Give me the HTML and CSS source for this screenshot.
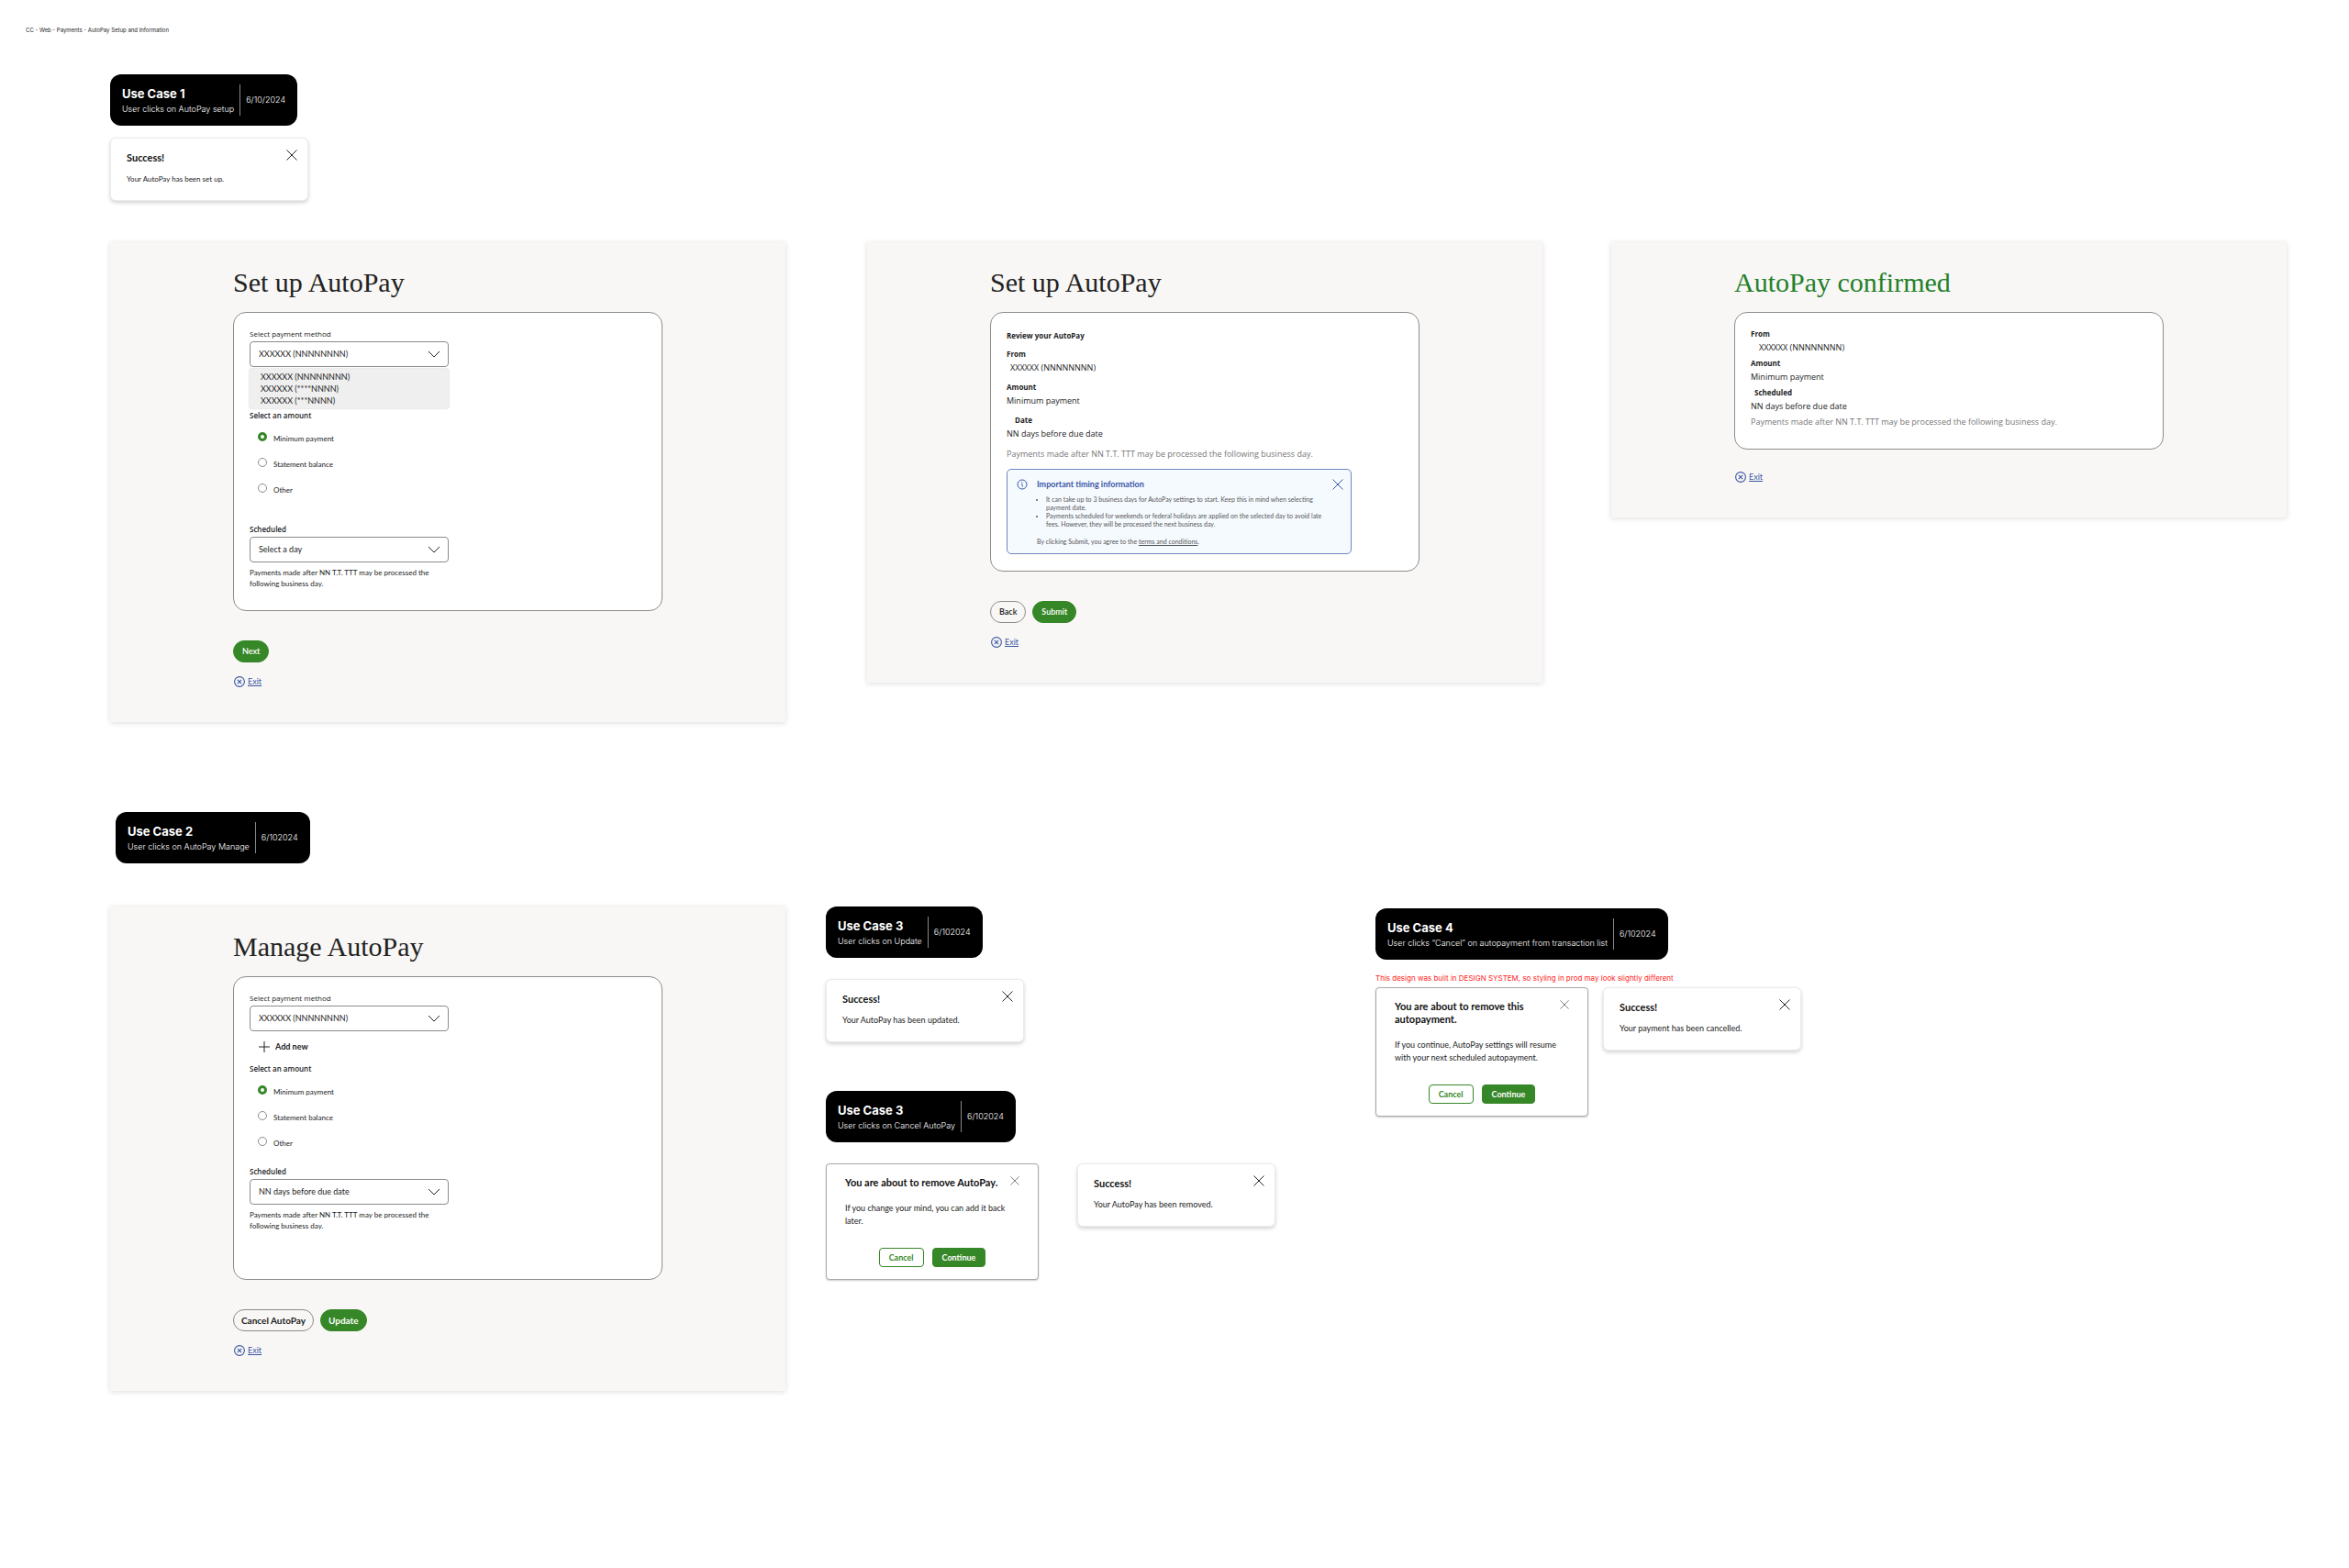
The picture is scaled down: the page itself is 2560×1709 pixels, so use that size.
FILE: index.html
```html
<!DOCTYPE html>
<html lang="en">
<head>
<meta charset="utf-8">
<title>CC - Web - Payments - AutoPay Setup and Information</title>
<link rel="stylesheet" href="styles.css">
</head>
<body>
<svg class="sprite" aria-hidden="true">
  <symbol id="icon-close" viewBox="0 0 12 12"><path d="M.5.5l11 11M11.5.5l-11 11" fill="none" stroke="currentColor"/></symbol>
  <symbol id="icon-chevron" viewBox="0 0 14 8"><path d="M1 1l6 6 6-6" fill="none" stroke="currentColor"/></symbol>
  <symbol id="icon-plus" viewBox="0 0 12 12"><path d="M6 0v12M0 6h12" fill="none" stroke="currentColor"/></symbol>
  <symbol id="icon-exit" viewBox="0 0 12 12"><circle cx="6" cy="6" r="5.4" fill="none" stroke="currentColor" stroke-width="1.1"/><path d="M3.8 3.8l4.4 4.4M8.2 3.8l-4.4 4.4" fill="none" stroke="currentColor" stroke-width="1.1"/></symbol>
  <symbol id="icon-info" viewBox="0 0 12 12"><circle cx="6" cy="6" r="5" fill="none" stroke="currentColor"/><path d="M5.2 5.2H6v2.6q0 .7.8.7" fill="none" stroke="currentColor" stroke-width=".9"/><circle cx="5.9" cy="3.5" r=".6" fill="currentColor"/></symbol>
</svg>

<header class="page-label">CC - Web - Payments - AutoPay Setup and Information</header>

<main>
  <section class="intro">
    <div class="badge">
      <div><h2 class="badge-title">Use Case 1</h2><p>User clicks on AutoPay setup</p></div>
      <time class="badge-date">6/10/2024</time>
    </div>
    <div class="toast toast-small">
      <div><h3>Success!</h3><p>Your AutoPay has been set up.</p></div>
      <button class="close" aria-label="Close"><svg><use href="#icon-close"/></svg></button>
    </div>
  </section>

  <section class="setup-flow">
    <article class="screen">
      <h1>Set up AutoPay</h1>
      <form class="card" id="setup-form">
        <label class="field-label" for="method-1">Select payment method</label>
        <div class="select">
          <select id="method-1"><option>XXXXXX (NNNNNNNN)</option></select>
          <svg><use href="#icon-chevron"/></svg>
        </div>
        <ul class="options" role="listbox" aria-label="Payment methods">
          <li role="option">XXXXXX (NNNNNNNN)</li>
          <li role="option">XXXXXX (****NNNN)</li>
          <li role="option">XXXXXX (***NNNN)</li>
        </ul>
        <fieldset class="amounts after-options">
          <legend>Select an amount</legend>
          <label><input type="radio" name="amount-1" checked><span>Minimum payment</span></label>
          <label><input type="radio" name="amount-1"><span>Statement balance</span></label>
          <label><input type="radio" name="amount-1"><span>Other</span></label>
        </fieldset>
        <label class="field-label strong roomy" for="day-1">Scheduled</label>
        <div class="select">
          <select id="day-1"><option>Select a day</option></select>
          <svg><use href="#icon-chevron"/></svg>
        </div>
        <p class="help">Payments made after NN T.T. TTT may be processed the following business day.</p>
      </form>
      <div class="actions"><button class="pill primary">Next</button></div>
      <a class="exit" href="#"><svg><use href="#icon-exit"/></svg><span>Exit</span></a>
    </article>

    <article class="screen">
      <h1>Set up AutoPay</h1>
      <div class="card review">
        <h2>Review your AutoPay</h2>
        <dl>
          <div><dt>From</dt><dd class="nudge-s">XXXXXX (NNNNNNNN)</dd></div>
          <div><dt>Amount</dt><dd>Minimum payment</dd></div>
          <div><dt class="nudge-m">Date</dt><dd>NN days before due date</dd></div>
        </dl>
        <p class="note">Payments made after NN T.T. TTT may be processed the following business day.</p>
        <aside class="alert">
          <svg class="alert-icon"><use href="#icon-info"/></svg>
          <div>
            <h3>Important timing information</h3>
            <ul>
              <li>It can take up to 3 business days for AutoPay settings to start. Keep this in mind when selecting payment date.</li>
              <li>Payments scheduled for weekends or federal holidays are applied on the selected day to avoid late fees. However, they will be processed the next business day.</li>
            </ul>
            <p>By clicking Submit, you agree to the <a href="#">terms and conditions</a>.</p>
          </div>
          <button class="close" aria-label="Close"><svg><use href="#icon-close"/></svg></button>
        </aside>
      </div>
      <div class="actions"><button class="pill">Back</button><button class="pill primary">Submit</button></div>
      <a class="exit" href="#"><svg><use href="#icon-exit"/></svg><span>Exit</span></a>
    </article>

    <article class="screen">
      <h1 class="confirmed">AutoPay confirmed</h1>
      <div class="card summary">
        <dl>
          <div><dt>From</dt><dd class="nudge-m">XXXXXX (NNNNNNNN)</dd></div>
          <div><dt>Amount</dt><dd>Minimum payment</dd></div>
          <div><dt class="nudge-s">Scheduled</dt><dd>NN days before due date</dd></div>
        </dl>
        <p class="note">Payments made after NN T.T. TTT may be processed the following business day.</p>
      </div>
      <a class="exit exit-far" href="#"><svg><use href="#icon-exit"/></svg><span>Exit</span></a>
    </article>
  </section>

  <section class="manage-intro">
    <div class="badge">
      <div><h2 class="badge-title">Use Case 2</h2><p>User clicks on AutoPay Manage</p></div>
      <time class="badge-date">6/102024</time>
    </div>
  </section>

  <section class="manage-flow">
    <article class="screen">
      <h1>Manage AutoPay</h1>
      <form class="card manage" id="manage-form">
        <label class="field-label" for="method-2">Select payment method</label>
        <div class="select">
          <select id="method-2"><option>XXXXXX (NNNNNNNN)</option></select>
          <svg><use href="#icon-chevron"/></svg>
        </div>
        <button type="button" class="add-new"><svg><use href="#icon-plus"/></svg>Add new</button>
        <fieldset class="amounts">
          <legend>Select an amount</legend>
          <label><input type="radio" name="amount-2" checked><span>Minimum payment</span></label>
          <label><input type="radio" name="amount-2"><span>Statement balance</span></label>
          <label><input type="radio" name="amount-2"><span>Other</span></label>
        </fieldset>
        <label class="field-label strong" for="day-2">Scheduled</label>
        <div class="select">
          <select id="day-2"><option>NN days before due date</option></select>
          <svg><use href="#icon-chevron"/></svg>
        </div>
        <p class="help">Payments made after NN T.T. TTT may be processed the following business day.</p>
      </form>
      <div class="actions actions-large"><button class="pill">Cancel AutoPay</button><button class="pill primary">Update</button></div>
      <a class="exit" href="#"><svg><use href="#icon-exit"/></svg><span>Exit</span></a>
    </article>

    <div class="case-column">
      <div class="badge">
        <div><h2 class="badge-title">Use Case 3</h2><p>User clicks on Update</p></div>
        <time class="badge-date">6/102024</time>
      </div>
      <div class="toast">
        <div><h3>Success!</h3><p>Your AutoPay has been updated.</p></div>
        <button class="close" aria-label="Close"><svg><use href="#icon-close"/></svg></button>
      </div>
      <div class="badge badge-next">
        <div><h2 class="badge-title">Use Case 3</h2><p>User clicks on Cancel AutoPay</p></div>
        <time class="badge-date">6/102024</time>
      </div>
      <div class="pair pair-wide">
        <div class="dialog" role="dialog" aria-labelledby="remove-title">
          <div class="dialog-head">
            <h3 id="remove-title">You are about to remove AutoPay.</h3>
            <button class="close" aria-label="Close"><svg><use href="#icon-close"/></svg></button>
          </div>
          <p>If you change your mind, you can add it back later.</p>
          <div class="dialog-actions"><button class="btn">Cancel</button><button class="btn primary">Continue</button></div>
        </div>
        <div class="toast">
          <div><h3>Success!</h3><p>Your AutoPay has been removed.</p></div>
          <button class="close" aria-label="Close"><svg><use href="#icon-close"/></svg></button>
        </div>
      </div>
    </div>

    <div class="case-column case-last">
      <div class="badge">
        <div><h2 class="badge-title">Use Case 4</h2><p>User clicks “Cancel” on autopayment from transaction list</p></div>
        <time class="badge-date">6/102024</time>
      </div>
      <p class="remark">This design was built in DESIGN SYSTEM, so styling in prod may look slightly different</p>
      <div class="pair">
        <div class="dialog" role="dialog" aria-labelledby="payment-title">
          <div class="dialog-head">
            <h3 id="payment-title">You are about to remove this autopayment.</h3>
            <button class="close" aria-label="Close"><svg><use href="#icon-close"/></svg></button>
          </div>
          <p>If you continue, AutoPay settings will resume with your next scheduled autopayment.</p>
          <div class="dialog-actions"><button class="btn">Cancel</button><button class="btn primary">Continue</button></div>
        </div>
        <div class="toast">
          <div><h3>Success!</h3><p>Your payment has been cancelled.</p></div>
          <button class="close" aria-label="Close"><svg><use href="#icon-close"/></svg></button>
        </div>
      </div>
    </div>
  </section>
</main>
</body>
</html>
```
FILE: styles.css
```css
:root {
  --green: #368727;
  --blue: #3a56a5;
  --ink: #222;
  --line: #8c8c8c;
  --wide: "Open Sans", "Noto Sans", sans-serif;
}

* { box-sizing: border-box; margin: 0; padding: 0; }

body {
  background: #fff;
  color: var(--ink);
  font: 400 9px/12px Lato, "Open Sans", sans-serif;
}

button, select, input { font: inherit; color: inherit; }
button { background: none; border: 0; white-space: nowrap; }
ul { list-style: none; }
fieldset { border: 0; min-width: 0; }
svg { display: block; }
.sprite { position: absolute; width: 0; height: 0; }

.page-label {
  padding: 28px 28px 43px;
  font: 400 6px/10px Inter, sans-serif;
}

main { padding: 0 68px 60px 120px; }

/* Black use-case badges */
.badge {
  display: flex;
  align-items: center;
  width: max-content;
  height: 56px;
  padding: 0 13px;
  border-radius: 12px;
  background: #000;
  color: #fff;
  font: 300 9px/14px Inter, sans-serif;
}
.badge-title { font-size: 13px; line-height: 20px; font-weight: 700; }
.badge-date {
  margin-left: 6px;
  padding-left: 6px;
  border-left: 1px solid #8a8a8a;
  line-height: 34px;
}

/* Success toasts */
.toast {
  display: flex;
  justify-content: space-between;
  align-items: flex-start;
  width: 216px;
  height: 69px;
  padding: 12px 11px 12px 17px;
  border: 1px solid #ebebeb;
  border-radius: 6px;
  background: #fff;
  box-shadow: 0 2px 4px rgba(0, 0, 0, .18);
}
.toast h3 { margin-top: 2px; color: #111; font-size: 11px; line-height: 14px; }
.toast p { margin-top: 9px; line-height: 14px; }
.toast-small { margin-top: 13px; }
.toast-small p { font-size: 8px; }

.close { flex: none; width: 12px; height: 12px; }
.close svg { width: 12px; height: 12px; }

/* Screens */
.setup-flow {
  display: grid;
  grid-template-columns: 1fr 89px 1fr 75px 1fr;
  align-items: start;
  margin-top: 45px;
}
.setup-flow .screen:nth-child(2) { grid-column: 3; }
.setup-flow .screen:nth-child(3) { grid-column: 5; }

.screen {
  padding: 26px 134px 38px;
  background: #f8f7f5;
  box-shadow: 0 1px 6px rgba(0, 0, 0, .14);
}
.screen h1 {
  margin-bottom: 14px;
  font: 400 30px/36px "Roboto Slab", "Liberation Serif", serif;
}
.screen .confirmed { color: #24802a; }

.card {
  padding: 17px 17px 23px;
  border: 1px solid var(--line);
  border-radius: 14px;
  background: #fff;
}
.card.manage { padding-bottom: 52px; }
.card.review { padding: 19px 17px 18px; }

.field-label { display: block; font: 500 8px/12px var(--wide); }
.field-label.strong { margin-top: 19px; font-weight: 600; }
.field-label.roomy { margin-top: 31px; }

.select { display: grid; align-items: center; width: 217px; margin-top: 2px; }
.select > * { grid-area: 1 / 1; }
.select select {
  appearance: none;
  height: 28px;
  padding: 0 9px;
  border: 1px solid var(--line);
  border-radius: 4px;
  background: #fff;
}
.select svg { justify-self: end; width: 14px; height: 8px; margin-right: 9px; pointer-events: none; }

.options {
  width: 217px;
  margin-top: 2px;
  padding: 2px 12px;
  border-radius: 3px;
  background: #efefef;
  box-shadow: 0 0 2px rgba(0, 0, 0, .3);
  line-height: 13px;
}

.amounts { margin-top: 12px; font-size: 8px; }
.amounts.after-options { margin-top: 2px; }
.amounts legend { margin-bottom: 12px; font-family: var(--wide); font-weight: 600; }
.amounts label { display: flex; gap: 7px; padding-left: 9px; }
.amounts label + label { margin-top: 15px; }
.amounts span { padding-top: 1px; }
.amounts input {
  appearance: none;
  width: 10px;
  height: 10px;
  border: 1px solid var(--line);
  border-radius: 50%;
  background: #fff;
}
.amounts input:checked { border: 3px solid var(--green); }

.help { width: 217px; margin-top: 5px; font-size: 8px; }

.add-new {
  display: flex;
  align-items: center;
  gap: 6px;
  margin: 11px 0 0 10px;
  font-weight: 700;
}
.add-new svg { width: 12px; height: 12px; }

.actions { display: flex; gap: 7px; margin-top: 32px; }
.pill {
  height: 24px;
  padding: 0 9px;
  border: 1px solid var(--line);
  border-radius: 12px;
  font-weight: 600;
}
.actions-large .pill { padding: 0 8px; font-size: 10px; font-weight: 700; }
.primary, .actions-large .primary { border-color: var(--green); background: var(--green); color: #fff; }

.exit {
  display: flex;
  align-items: center;
  gap: 3px;
  width: max-content;
  margin-top: 15px;
  padding-left: 1px;
  color: var(--blue);
  text-decoration: none;
}
.exit svg { width: 12px; height: 12px; }
.exit span { text-decoration: underline; }
.exit-far { margin-top: 24px; }

/* Review and summary lists */
.review h2 { margin-bottom: 8px; font: 700 8px/12px var(--wide); }
dl { display: grid; gap: 9px; }
.summary dl { gap: 5px; }
dt { font: 700 8px/12px var(--wide); }
dd { margin-top: 3px; font-family: var(--wide); }
.nudge-s { padding-left: 4px; }
.nudge-m { padding-left: 9px; }
.note { margin-top: 10px; color: #777; font-family: var(--wide); }
.summary .note { margin-top: 5px; }

.alert {
  display: grid;
  grid-template-columns: 12px 1fr 12px;
  gap: 10px;
  width: 376px;
  margin-top: 10px;
  padding: 10px 8px 8px 10px;
  border: 1px solid #6f86c0;
  border-radius: 5px;
  background: #f5faff;
  color: #555;
  font-size: 7px;
  line-height: 9px;
}
.alert h3 { color: var(--blue); font-size: 9px; line-height: 12px; font-weight: 700; }
.alert ul { margin-top: 6px; padding-left: 10px; list-style: disc; }
.alert p { margin-top: 10px; }
.alert a { color: inherit; }
.alert-icon { width: 12px; height: 12px; color: var(--blue); }
.alert .close { color: var(--blue); }

/* Manage flow */
.manage-intro { padding: 98px 0 0 6px; }
.manage-flow {
  display: grid;
  grid-template-columns: 736fr 555fr 993fr;
  column-gap: 44px;
  align-items: start;
  margin-top: 47px;
}
.case-last { padding-top: 2px; }
.case-column > .toast { margin-top: 23px; }
.badge-next { margin-top: 53px; }
.pair { display: flex; align-items: flex-start; gap: 16px; }
.pair-wide { gap: 42px; margin-top: 23px; }

.remark {
  margin: 14px 0 4px;
  color: #f22;
  font: 400 8px/12px Inter, sans-serif;
}

.dialog {
  width: 232px;
  padding: 13px 20px 13px;
  border: 1px solid #a9a9a9;
  border-radius: 4px;
  background: #fff;
  box-shadow: 0 1px 2px rgba(0, 0, 0, .2);
}
.dialog-head { display: flex; justify-content: space-between; align-items: flex-start; }
.dialog h3 { width: 170px; color: #111; font-size: 11px; line-height: 14px; }
.dialog p { margin-top: 14px; line-height: 14px; }
.dialog .close, .dialog .close svg { width: 10px; height: 10px; color: #666; }
.dialog-actions { display: flex; justify-content: center; gap: 9px; margin-top: 22px; }
.btn {
  height: 21px;
  padding: 0 10px;
  border: 1px solid var(--green);
  border-radius: 4px;
  color: var(--green);
  font-weight: 700;
}
.btn.primary { color: #fff; }
```
